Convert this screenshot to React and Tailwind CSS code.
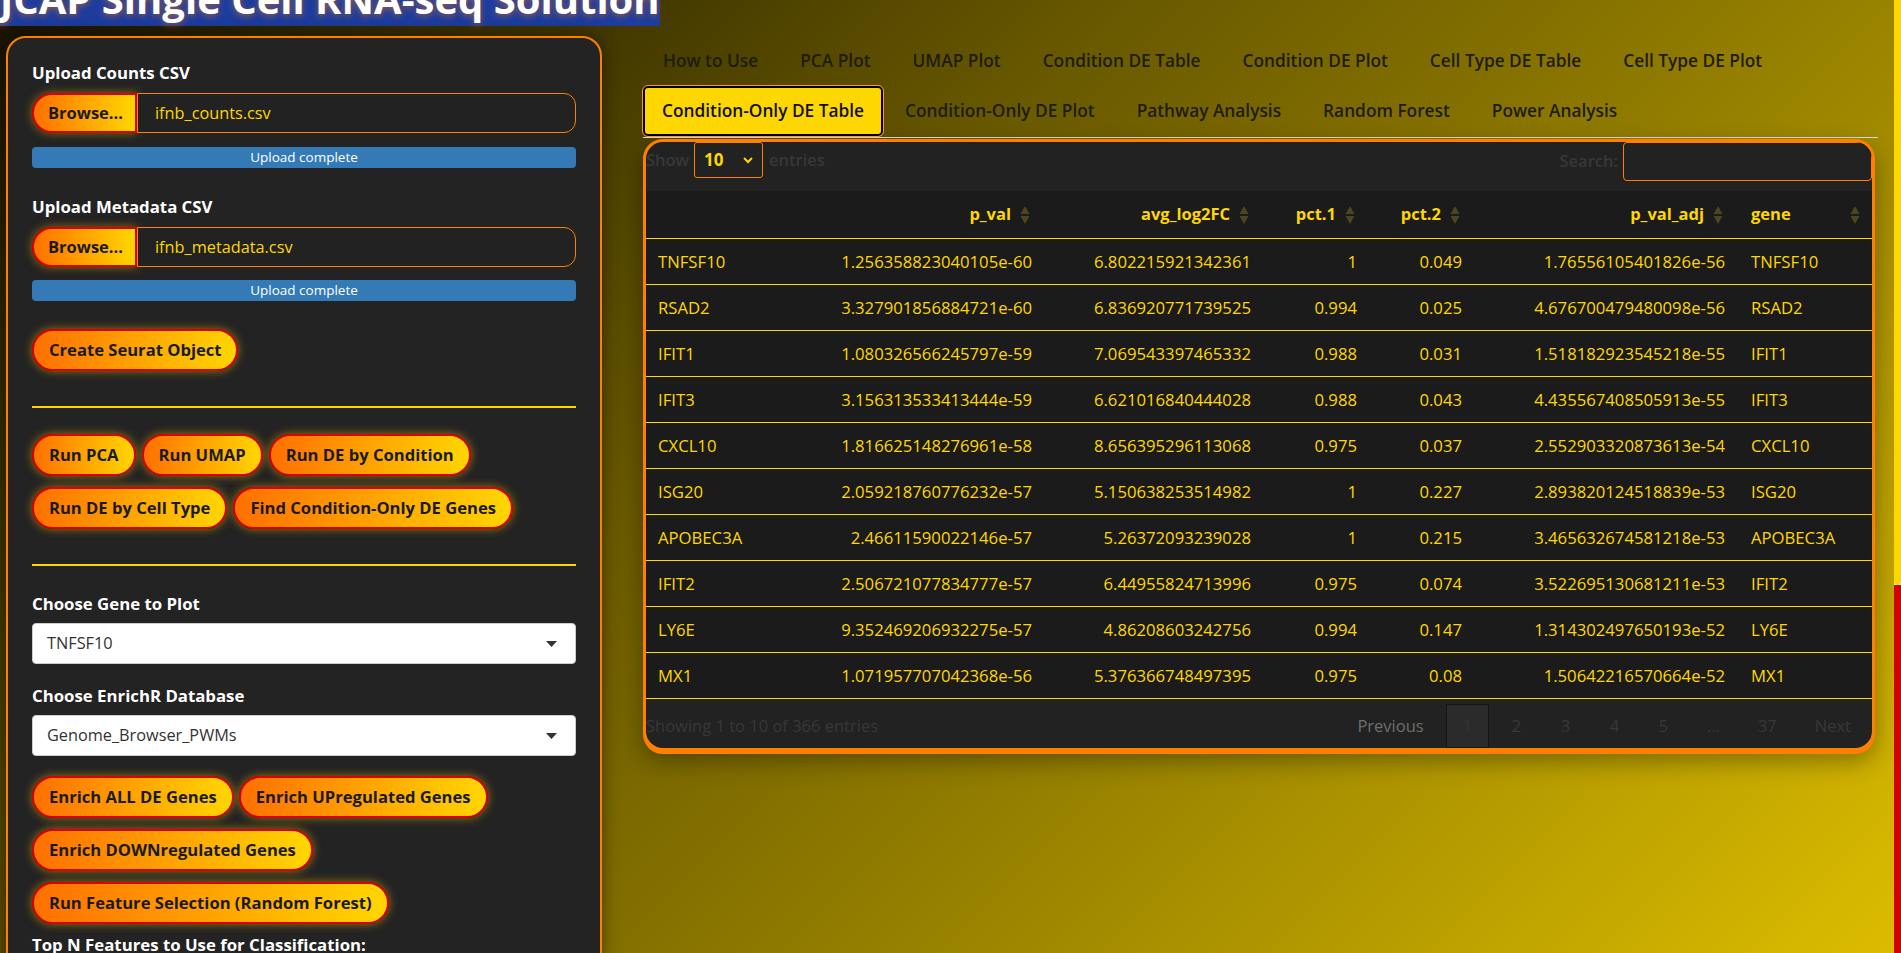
import React from "react";

const rows = [
  ["TNFSF10", "1.256358823040105e-60", "6.802215921342361", "1", "0.049", "1.76556105401826e-56", "TNFSF10"],
  ["RSAD2", "3.327901856884721e-60", "6.836920771739525", "0.994", "0.025", "4.676700479480098e-56", "RSAD2"],
  ["IFIT1", "1.080326566245797e-59", "7.069543397465332", "0.988", "0.031", "1.518182923545218e-55", "IFIT1"],
  ["IFIT3", "3.156313533413444e-59", "6.621016840444028", "0.988", "0.043", "4.435567408505913e-55", "IFIT3"],
  ["CXCL10", "1.816625148276961e-58", "8.656395296113068", "0.975", "0.037", "2.552903320873613e-54", "CXCL10"],
  ["ISG20", "2.059218760776232e-57", "5.150638253514982", "1", "0.227", "2.893820124518839e-53", "ISG20"],
  ["APOBEC3A", "2.46611590022146e-57", "5.26372093239028", "1", "0.215", "3.465632674581218e-53", "APOBEC3A"],
  ["IFIT2", "2.506721077834777e-57", "6.44955824713996", "0.975", "0.074", "3.522695130681211e-53", "IFIT2"],
  ["LY6E", "9.352469206932275e-57", "4.86208603242756", "0.994", "0.147", "1.314302497650193e-52", "LY6E"],
  ["MX1", "1.071957707042368e-56", "5.376366748497395", "0.975", "0.08", "1.50642216570664e-52", "MX1"],
];

function Btn({ children }) {
  return (
    <button className="h-[42px] px-[15px] rounded-full border-2 border-[#dc0000] bg-[linear-gradient(90deg,#ff7000,#ffd600)] text-[#1a1a1a] font-bold text-[16.6px] leading-none shadow-[0_0_10px_rgba(255,190,0,0.55)] whitespace-nowrap">
      {children}
    </button>
  );
}

function FileRow({ name }) {
  return (
    <div className="flex h-[40px]">
      <div className="w-[105px] shrink-0 flex items-center pl-[14px] rounded-l-full border-2 border-[#dc0000] bg-[linear-gradient(90deg,#ff7000,#ffd600)] text-[#1a1a1a] font-bold text-[16.5px] shadow-[0_0_10px_rgba(255,190,0,0.5)]">
        Browse...
      </div>
      <div className="flex-1 flex items-center pl-[17px] border border-[#ff7f00] rounded-r-[12px] bg-[#222222] text-[#ffd700] text-[16.3px]">
        {name}
      </div>
    </div>
  );
}

function Progress() {
  return (
    <div className="h-[21px] rounded-[4px] bg-[#337ab7] flex items-center justify-center text-white text-[13.5px] leading-none">
      Upload complete
    </div>
  );
}

function Select({ value }) {
  return (
    <div className="h-[41px] rounded-[4px] bg-white border border-[#cccccc] flex items-center justify-between pl-[14px] pr-[18px] text-[#333333] text-[16.3px]">
      <span>{value}</span>
      <svg width="11" height="6" viewBox="0 0 11 6"><path d="M0 0 L11 0 L5.5 6 Z" fill="#333" /></svg>
    </div>
  );
}

function SortIcon() {
  return (
    <svg width="10" height="20" viewBox="0 0 10 20" className="absolute right-[12px] top-1/2 -translate-y-1/2">
      <path d="M5 1 L9.5 9 L0.5 9 Z" fill="#4a4622" />
      <path d="M5 19 L9.5 11 L0.5 11 Z" fill="#4a4622" />
    </svg>
  );
}

const cols = "grid grid-cols-[180px_216px_219px_106px_105px_263px_1fr]";

function Tab({ children, active }) {
  if (active) {
    return (
      <div className="h-[50px] mr-[2px] rounded-[5px] outline outline-1 outline-[#ff9a1a] border-2 border-black bg-[#ffd700] px-[17px] flex items-center text-[#111111] font-semibold text-[17.3px]">
        {children}
      </div>
    );
  }
  return (
    <div className="h-[50px] mr-[2px] px-[20px] flex items-center text-[#201c0c] font-semibold text-[17.3px]">
      {children}
    </div>
  );
}

export default function App() {
  return (
    <div className="h-screen w-full overflow-hidden flex font-['Open_Sans',sans-serif]">
      <div className="flex-1 min-w-0 bg-[linear-gradient(135deg,#181300_0%,#3e3400_20%,#6a5a00_40%,#847000_55%,#9c8600_68%,#b49a00_80%,#dcbc00_100%)]">
        <h1 className="-mt-[21px] leading-none text-[40px] font-bold text-white whitespace-nowrap">
          <span className="bg-[#1d3d9e] [text-shadow:0_2px_6px_rgba(255,120,0,0.5)]">JCAP Single Cell RNA-seq Solution</span>
        </h1>
        <div className="flex pl-[6px] mt-[17px]">
          <aside className="w-[596px] shrink-0 h-[1500px] rounded-[20px] border-2 border-[#ff7f00] bg-[#232323] px-[24px] pt-[24px] shadow-[0_0_18px_rgba(0,0,0,0.45)]">
            <div className="text-white font-bold text-[16.8px] leading-[22px]">Upload Counts CSV</div>
            <div className="mt-[9px]"><FileRow name="ifnb_counts.csv" /></div>
            <div className="mt-[14px]"><Progress /></div>

            <div className="mt-[28px] text-white font-bold text-[16.8px] leading-[22px]">Upload Metadata CSV</div>
            <div className="mt-[9px]"><FileRow name="ifnb_metadata.csv" /></div>
            <div className="mt-[13px]"><Progress /></div>

            <div className="mt-[28px] flex"><Btn>Create Seurat Object</Btn></div>

            <div className="mt-[35px] h-[2px] bg-[#ffd700]" />

            <div className="mt-[26px] flex flex-wrap gap-x-[6px] gap-y-[11px]">
              <Btn>Run PCA</Btn>
              <Btn>Run UMAP</Btn>
              <Btn>Run DE by Condition</Btn>
              <Btn>Run DE by Cell Type</Btn>
              <Btn>Find Condition-Only DE Genes</Btn>
            </div>

            <div className="mt-[35px] h-[2px] bg-[#ffd700]" />

            <div className="mt-[27px] text-white font-bold text-[16.8px] leading-[22px]">Choose Gene to Plot</div>
            <div className="mt-[8px]"><Select value="TNFSF10" /></div>

            <div className="mt-[21px] text-white font-bold text-[16.8px] leading-[22px]">Choose EnrichR Database</div>
            <div className="mt-[8px]"><Select value="Genome_Browser_PWMs" /></div>

            <div className="mt-[20px] flex flex-wrap gap-x-[5px] gap-y-[11px]">
              <Btn>Enrich ALL DE Genes</Btn>
              <Btn>Enrich UPregulated Genes</Btn>
              <Btn>Enrich DOWNregulated Genes</Btn>
              <Btn>Run Feature Selection (Random Forest)</Btn>
            </div>

            <div className="mt-[10px] text-white font-bold text-[16.8px] leading-[22px]">Top N Features to Use for Classification:</div>
          </aside>

          <main className="flex-1 min-w-0 ml-[41px] mr-[16px]">
            <div className="flex flex-wrap border-b border-[#dddddd] pb-[1px]">
              <Tab>How to Use</Tab>
              <Tab>PCA Plot</Tab>
              <Tab>UMAP Plot</Tab>
              <Tab>Condition DE Table</Tab>
              <Tab>Condition DE Plot</Tab>
              <Tab>Cell Type DE Table</Tab>
              <Tab>Cell Type DE Plot</Tab>
              <div className="w-full" />
              <Tab active>Condition-Only DE Table</Tab>
              <Tab>Condition-Only DE Plot</Tab>
              <Tab>Pathway Analysis</Tab>
              <Tab>Random Forest</Tab>
              <Tab>Power Analysis</Tab>
            </div>

            <div className="mt-[1px] mr-[3px] rounded-[20px] border-[3px] border-[#ff7f00] bg-[#222222] overflow-hidden shadow-[0_3px_0_#ff7f00,0_10px_24px_rgba(0,0,0,0.35)]">
              <div className="h-[49px] flex items-start justify-between">
                <div className="h-[36px] flex items-center text-[#383838] font-semibold text-[16.5px]">
                  <span>Show</span>
                  <div className="ml-[5px] mr-[6px] w-[69px] h-[36px] border border-[#ff7f00] rounded-[3px] bg-[#222222] flex items-center justify-between pl-[9px] pr-[8px]">
                    <span className="text-[#ffd700] font-bold text-[17px]">10</span>
                    <svg width="12" height="8" viewBox="0 0 12 8"><path d="M2 2 L6 6 L10 2" stroke="#ffd700" strokeWidth="2" fill="none" /></svg>
                  </div>
                  <span>entries</span>
                </div>
                <div className="h-[39px] flex items-center text-[#383838] font-semibold text-[16.5px]">
                  <span>Search:</span>
                  <div className="ml-[5px] w-[249px] h-[39px] border border-[#ff7f00] rounded-[4px] bg-[#222222]" />
                </div>
              </div>

              <div className={`${cols} h-[48px] bg-[#1b1b1b] border-b border-[#ffd700] text-[#ffd700] font-bold text-[16.5px]`}>
                <div />
                {["p_val", "avg_log2FC", "pct.1", "pct.2", "p_val_adj"].map((h) => (
                  <div key={h} className="relative flex items-center justify-end pr-[31px]">
                    {h}
                    <SortIcon />
                  </div>
                ))}
                <div className="relative flex items-center pl-[16px]">
                  gene
                  <SortIcon />
                </div>
              </div>

              {rows.map((r) => (
                <div key={r[0]} className={`${cols} h-[46px] bg-[#1b1b1b] border-b border-[#ffd700] text-[#ffd700] text-[16.7px]`}>
                  <div className="flex items-center pl-[12px]">{r[0]}</div>
                  <div className="flex items-center justify-end pr-[10px] whitespace-nowrap">{r[1]}</div>
                  <div className="flex items-center justify-end pr-[10px]">{r[2]}</div>
                  <div className="flex items-center justify-end pr-[10px]">{r[3]}</div>
                  <div className="flex items-center justify-end pr-[10px]">{r[4]}</div>
                  <div className="flex items-center justify-end pr-[10px] whitespace-nowrap">{r[5]}</div>
                  <div className="flex items-center pl-[16px]">{r[6]}</div>
                </div>
              ))}

              <div className="h-[49px] pt-[5px] flex justify-between text-[16.5px]">
                <div className="h-[44px] flex items-center text-[#383838]">Showing 1 to 10 of 366 entries</div>
                <div className="flex gap-[6px] pr-[5px] text-[#383838]">
                  <div className="h-[44px] px-[16px] flex items-center text-[#6e6e6e]">Previous</div>
                  <div className="h-[44px] min-w-[43px] px-[16px] flex items-center justify-center bg-[#2b2b2b] border border-[#141414] text-[#333333]">1</div>
                  {["2", "3", "4", "5", "…", "37", "Next"].map((p) => (
                    <div key={p} className="h-[44px] min-w-[43px] px-[16px] flex items-center justify-center">{p}</div>
                  ))}
                </div>
              </div>
            </div>
          </main>
        </div>
      </div>
      <div className="w-[7px] shrink-0 flex flex-col">
        <div className="h-[585px] bg-[#ffd700] rounded-b-[4px]" />
        <div className="flex-1 bg-[#d40000]" />
      </div>
    </div>
  );
}
